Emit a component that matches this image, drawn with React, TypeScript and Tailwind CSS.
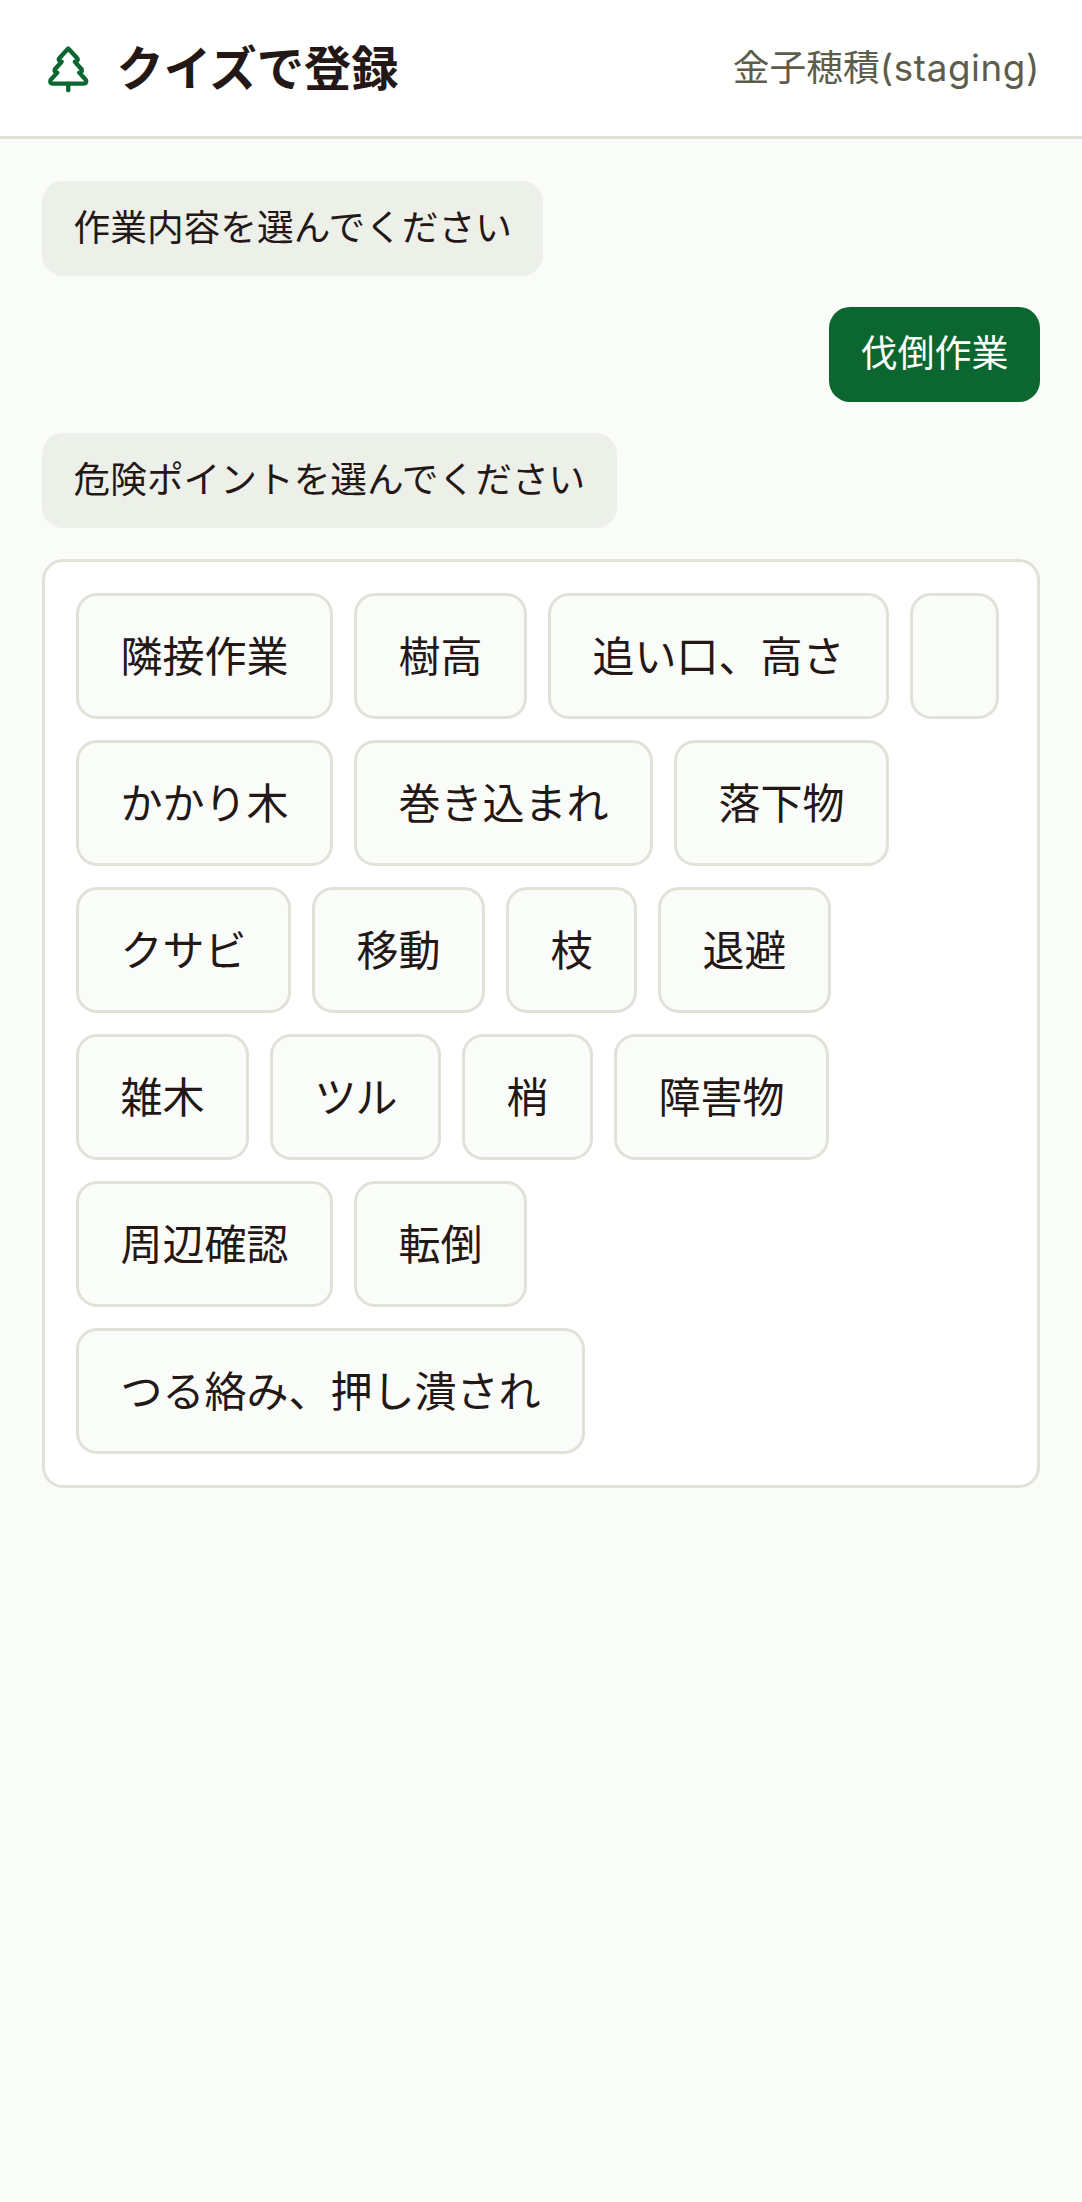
import React from 'react';
import { TreePine } from 'lucide-react';

const options = [
  '隣接作業', '樹高', '追い口、高さ', '',
  'かかり木', '巻き込まれ', '落下物',
  'クサビ', '移動', '枝', '退避',
  '雑木', 'ツル', '梢', '障害物',
  '周辺確認', '転倒',
  'つる絡み、押し潰され',
];

const Bubble: React.FC<{ text: string }> = ({ text }) => (
  <div className="self-start rounded-[21px] bg-[#edefe9] px-[31.5px] py-[21px] text-[36.7px] leading-[52.5px] text-[#231815]">
    {text}
  </div>
);

const App: React.FC = () => {
  return (
    <div className="flex min-h-screen flex-col bg-[#fafcf9] font-['Inter','Noto_Sans_CJK_JP',sans-serif]">
      <header className="flex h-[139px] items-center justify-between border-b-[3px] border-[#e0e2d8] bg-white px-[42px]">
        <div className="flex items-center gap-[22px]">
          <TreePine className="h-[52.5px] w-[52.5px] text-[#0b672f]" strokeWidth={2} />
          <h1 className="text-[47.25px] leading-[63px] font-bold text-[#231815]">クイズで登録</h1>
        </div>
        <span className="text-[36.75px] leading-[52.5px] text-[#5d5d4c]">
          金子穂積<span className="tracking-[0.6px]">(staging)</span>
        </span>
      </header>

      <main className="flex flex-col gap-[31.5px] p-[42px]">
        <Bubble text="作業内容を選んでください" />
        <div className="self-end rounded-[21px] bg-[#0b672f] px-[31.5px] py-[21px] text-[37px] leading-[52.5px] text-white">
          伐倒作業
        </div>
        <Bubble text="危険ポイントを選んでください" />

        <div className="flex flex-wrap gap-[21px] rounded-[21px] border-[3px] border-[#e0e2d8] bg-white p-[31px]">
          {options.map((label, i) => (
            <button
              key={i}
              className={`rounded-[21px] border-[3px] border-[#e0e2d8] bg-[#fafcf9] px-[41.5px] py-[28.5px] text-[42px] leading-[63px] text-[#231815] ${label === 'ツル' ? 'tracking-[-1px]' : ''}`}
            >
              {label}
            </button>
          ))}
        </div>
      </main>
    </div>
  );
};

export default App;
